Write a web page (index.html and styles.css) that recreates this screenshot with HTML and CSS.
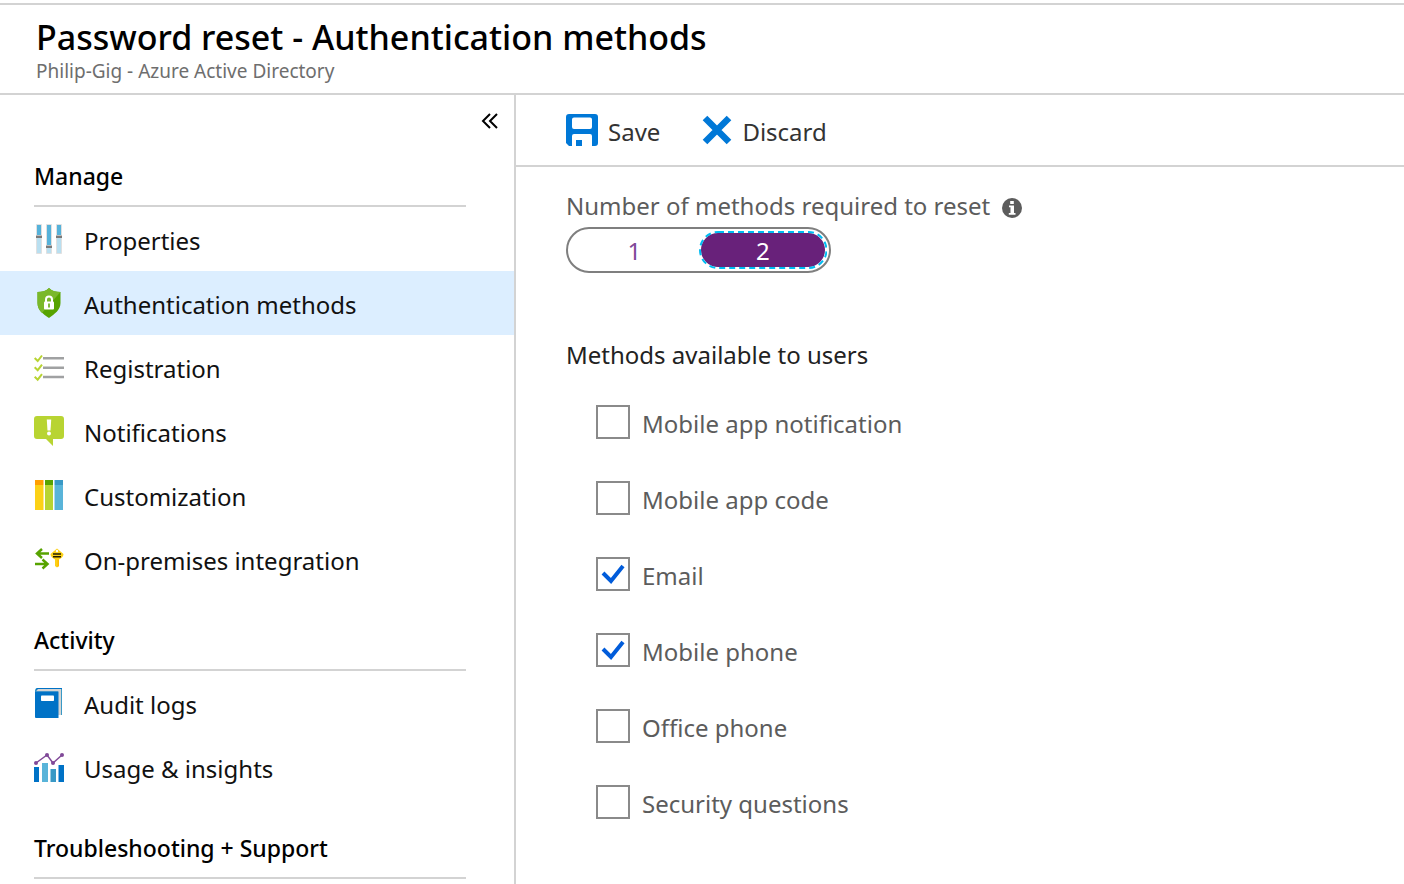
FILE: index.html
```html
<!DOCTYPE html>
<html lang="en">
<head>
<meta charset="utf-8">
<meta name="viewport" content="width=device-width, initial-scale=1">
<title>Password reset - Authentication methods</title>
<link rel="stylesheet" href="styles.css">
</head>
<body>
<header class="page-header">
  <h1 class="page-title">Password reset - Authentication methods</h1>
  <p class="page-subtitle">Philip-Gig - Azure Active Directory</p>
</header>
<div class="workspace">
  <aside class="sidebar">
    <div class="sidebar-top">
      <button class="collapse" type="button" aria-label="Collapse menu">
        <svg width="18" height="16" viewBox="0 0 18 16" fill="none" stroke="#000" stroke-width="2"><path d="M9 1 2 8l7 7M16 1 9 8l7 7"/></svg>
      </button>
    </div>
    <nav class="menu" aria-label="Password reset">
      <h2 class="menu-heading">Manage</h2>
      <ul class="menu-list">
        <li><a class="menu-item" href="#properties">
          <svg class="menu-icon" viewBox="0 0 30 30"><g fill="#b9dff0" stroke="#e0e0e0"><path d="M2.500.5h5v29h-5zM12.500.5h5v29h-5zM22.500.5h5v29h-5z"/></g><path fill="#55b2da" d="M3 1h4v11H3zM13 1h4v20h-4zM23 1h4v11h-4z"/><path fill="#7a7a7a" d="M2 11h6v3H2zM12 21h6v3h-6zM22 11h6v3h-6z"/><path fill="#bcbcbc" d="M2 11h6v1H2zM12 21h6v1h-6zM22 11h6v1h-6z"/></svg>
          <span class="label">Properties</span></a></li>
        <li><a class="menu-item menu-item-active" href="#authentication" aria-current="page">
          <svg class="menu-icon" viewBox="0 0 30 30"><path fill="#57a300" d="M15 0c3 3 7 4 11.500 4v11c0 7-6 11-11.500 15C9 26 3.500 22 3.500 15V4C8 4 12 3 15 0z"/><path fill="#7ab82a" d="M15 0c3 3 7 4 11.500 4L8 25c-3-3-4.500-6-4.500-10V4C8 4 12 3 15 0z"/><rect x="10" y="13.500" width="10" height="8" rx="1" fill="#fff"/><path d="M12 14v-2.500c0-4 6-4 6 0V14" fill="none" stroke="#fff" stroke-width="2"/><path d="M15 16v3" stroke="#57a300" stroke-width="1.500" stroke-linecap="round"/></svg>
          <span class="label">Authentication methods</span></a></li>
        <li><a class="menu-item" href="#registration">
          <svg class="menu-icon" viewBox="0 0 30 30"><path d="M9 6.300h21M9 15.700h21M9 25h21" stroke="#a0a1a2" stroke-width="2.500"/><path d="m.7 6 3 3L8 3.500M.7 15.200l3 3L8 12.700M.7 24.700l3 3L8 22.200" fill="none" stroke="#b8d432" stroke-width="2"/></svg>
          <span class="label">Registration</span></a></li>
        <li><a class="menu-item" href="#notifications">
          <svg class="menu-icon" viewBox="0 0 30 30"><path fill="#b8d432" d="M3 0h24q3 0 3 3v17q0 3-3 3h-8v7l-7-7H3q-3 0-3-3V3q0-3 3-3z"/><path fill="#fff" d="M12.800 3.500h4.400l-.7 11h-3z"/><circle cx="15" cy="17.500" r="2" fill="#fff"/></svg>
          <span class="label">Notifications</span></a></li>
        <li><a class="menu-item" href="#customization">
          <svg class="menu-icon" viewBox="0 0 30 30"><path fill="#fcd116" d="M1 5h8.500v25H1z"/><path fill="#ff9f00" d="M1 0h8.500v5H1z"/><path fill="#b8d432" d="M11 5h8v25h-8z"/><path fill="#57a300" d="M11 0h8v5h-8z"/><path fill="#59b4d9" d="M20.500 5H29v25h-8.500z"/><path fill="#3999c6" d="M20.500 0H29v5h-8.500z"/></svg>
          <span class="label">Customization</span></a></li>
        <li><a class="menu-item" href="#on-premises">
          <svg class="menu-icon" viewBox="0 0 30 30"><path d="M15 9.500H3M8 5 3 9.500l5 4.500M1 20h12M8.500 15.500l5 4.500-5 4.500" fill="none" stroke="#57a300" stroke-width="2.500"/><path fill="#fcd116" d="m23 4.500 6.500 5.500q0 3-4.500 5.500V22l-2 1.500-2-1.500v-6.500q-4.500-2.500-4.500-5.500z"/><path fill="#ffb900" d="M23.500 15.500H25V22l-1.500 1z"/><circle cx="23" cy="7" r="1.200" fill="#fff"/><path stroke="#221c00" stroke-width="1.500" d="M19 10h8M19 12.700h8"/></svg>
          <span class="label">On-premises integration</span></a></li>
      </ul>
      <h2 class="menu-heading">Activity</h2>
      <ul class="menu-list">
        <li><a class="menu-item" href="#audit">
          <svg class="menu-icon" viewBox="0 0 30 30"><path fill="#3999c6" d="M3 0h25v27h-3L1 3.500Q1 0 3 0z"/><path fill="#0072c6" d="M3 0h25v1H4L1 3z"/><path fill="#d4d4d4" d="M4 1h23v26h-3V3.500H2z"/><path fill="#0072c6" d="M1 3.500h23.500V30H2q-1 0-1-1z"/><rect x="7" y="7.500" width="13" height="5.500" rx=".8" fill="#fff"/></svg>
          <span class="label">Audit logs</span></a></li>
        <li><a class="menu-item" href="#usage">
          <svg class="menu-icon" viewBox="0 0 30 30"><path fill="#0072c6" d="M0 15h5v15H0zM24.500 13H30v17h-5.500z"/><path fill="#59b4d9" d="M8 11h6v19H8z"/><path fill="#3999c6" d="M16.500 17H22v13h-5.500z"/><path d="m2 11 11-8 6 8 9-8" fill="none" stroke="#804998" stroke-width="1.500"/><g fill="#804998"><circle cx="2" cy="11" r="2"/><circle cx="13" cy="3" r="2"/><circle cx="19" cy="11" r="2"/><circle cx="28" cy="3" r="2"/></g></svg>
          <span class="label">Usage &amp; insights</span></a></li>
      </ul>
      <h2 class="menu-heading">Troubleshooting + Support</h2>
    </nav>
  </aside>
  <main class="content">
    <div class="toolbar">
      <button class="command" type="button">
        <svg width="32" height="32" viewBox="0 0 32 32"><path fill="#0078d7" fill-rule="evenodd" d="M3 0h26q3 0 3 3v26q0 3-3 3h-3V22q0-2-2-2H8q-2 0-2 2v10H3l-3-3V3q0-3 3-3zM8 3.500q-2 0-2 2V13q0 2 2 2h16q2 0 2-2V5.500q0-2-2-2z"/><path fill="#0078d7" d="M10 26h6v6h-6z"/></svg>
        <span class="label">Save</span>
      </button>
      <button class="command" type="button">
        <svg width="30" height="32" viewBox="0 0 30 32"><path d="m3 4 24 24M27 4 3 28" stroke="#0078d7" stroke-width="6.500"/></svg>
        <span class="label">Discard</span>
      </button>
    </div>
    <form class="settings">
      <fieldset class="group">
        <legend class="count-legend">Number of methods required to reset
          <svg class="info" width="20" height="20" viewBox="0 0 20 20"><circle cx="10" cy="10" r="10" fill="#5c5c5c"/><path fill="#fff" d="M8.200 3h3.600v3H8.200zM7 7.500h5V15h1.500v1.800H6.800V15h1.700V9.300H7z"/></svg>
        </legend>
        <div class="switch">
          <label class="switch-option"><input class="switch-input" type="radio" name="count" value="1"><span class="switch-text">1</span></label>
          <label class="switch-option"><input class="switch-input" type="radio" name="count" value="2" checked><span class="switch-text">2</span><svg class="switch-focus" aria-hidden="true"><rect class="focus-line" rx="18"/></svg></label>
        </div>
      </fieldset>
      <fieldset class="group">
        <legend class="methods-legend">Methods available to users</legend>
        <div class="methods">
          <label class="method"><input class="check" type="checkbox"><span class="label">Mobile app notification</span></label>
          <label class="method"><input class="check" type="checkbox"><span class="label">Mobile app code</span></label>
          <label class="method"><input class="check" type="checkbox" checked><span class="label">Email</span></label>
          <label class="method"><input class="check" type="checkbox" checked><span class="label">Mobile phone</span></label>
          <label class="method"><input class="check" type="checkbox"><span class="label">Office phone</span></label>
          <label class="method"><input class="check" type="checkbox"><span class="label">Security questions</span></label>
        </div>
      </fieldset>
    </form>
  </main>
</div>
</body>
</html>
```
FILE: styles.css
```css
* { box-sizing: border-box; }
body {
  margin: 0;
  padding-top: 3px;
  min-height: 100vh;
  display: flex;
  flex-direction: column;
  background: #fff;
  color: #000;
  font: 24px/32px "Noto Sans", "Open Sans", sans-serif;
}
h1, h2, p, ul, fieldset { margin: 0; padding: 0; }
fieldset { border: 0; min-width: 0; }
legend { padding: 0; }
button { border: 0; padding: 0; background: none; font: inherit; cursor: pointer; }
svg { display: block; flex: none; }
.label { padding-top: 4px; }

.page-header {
  border-top: 2px solid #d3d3d3;
  border-bottom: 2px solid #d3d3d3;
  padding: 10px 36px 9px;
}
.page-title { font-size: 34px; line-height: 44px; font-weight: 500; }
.page-subtitle { font-size: 19px; line-height: 25px; color: #6e6e6e; }

.workspace { flex: 1; display: flex; }
.sidebar { flex: 0 0 516px; border-right: 2px solid #d3d3d3; }
.sidebar-top { height: 32px; display: flex; justify-content: flex-end; padding: 18px 15px 0 0; }
.collapse { height: 16px; }
.menu-heading {
  margin: 0 48px 0 34px;
  padding: 33px 0 13px;
  border-bottom: 2px solid #d3d3d3;
  font-size: 23px;
  line-height: 32px;
  font-weight: 500;
}
.menu-list { list-style: none; }
.menu-item {
  display: flex;
  align-items: center;
  gap: 20px;
  height: 64px;
  padding-left: 34px;
  color: #111;
  text-decoration: none;
}
.menu-item-active { background: #dceeff; }
.menu-icon { width: 30px; height: 30px; overflow: visible; }

.content { flex: 1; min-width: 0; }
.toolbar {
  display: flex;
  gap: 42px;
  height: 72px;
  padding: 0 50px;
  border-bottom: 2px solid #d3d3d3;
}
.command { display: flex; align-items: center; gap: 10px; color: #333; }
.settings { padding: 23px 50px; }
.count-legend { display: flex; align-items: center; gap: 12px; color: #5c5c5c; }
.info { margin-top: 4px; }
.switch {
  display: flex;
  width: 265px;
  height: 46px;
  margin-top: 5px;
  padding: 2px;
  border: 2px solid #7f7f7f;
  border-radius: 23px;
}
.switch-option { position: relative; flex: 1; display: flex; }
.switch-input { position: absolute; opacity: 0; margin: 0; }
.switch-text {
  flex: 1;
  border-radius: 19px;
  line-height: 40px;
  text-align: center;
  color: #804998;
}
.switch-input:checked + .switch-text { margin: 2px; line-height: 36px; background: #68217a; color: #fff; }
.switch-focus { position: absolute; inset: 0; width: 100%; height: 100%; }
.focus-line { x: 1px; y: 1px; width: calc(100% - 2px); height: calc(100% - 2px); fill: none; stroke: #00bcf2; stroke-width: 2; stroke-dasharray: 6 4; }

.methods-legend { padding-top: 66px; color: #222; }
.methods { display: grid; gap: 42px; padding: 34px 0 0 30px; }
.method { display: flex; align-items: center; gap: 12px; height: 34px; color: #5c5c5c; }
.check {
  appearance: none;
  flex: none;
  width: 34px;
  height: 34px;
  margin: 0;
  border: 2px solid #8a8a8a;
  background: #fff;
}
.check:checked {
  background: url("data:image/svg+xml,%3Csvg xmlns='http://www.w3.org/2000/svg' viewBox='0 0 30 30'%3E%3Cpath d='m5 14 8 8L25 7' fill='none' stroke='%23015cda' stroke-width='4'/%3E%3C/svg%3E") center / 30px 30px no-repeat;
}
```
